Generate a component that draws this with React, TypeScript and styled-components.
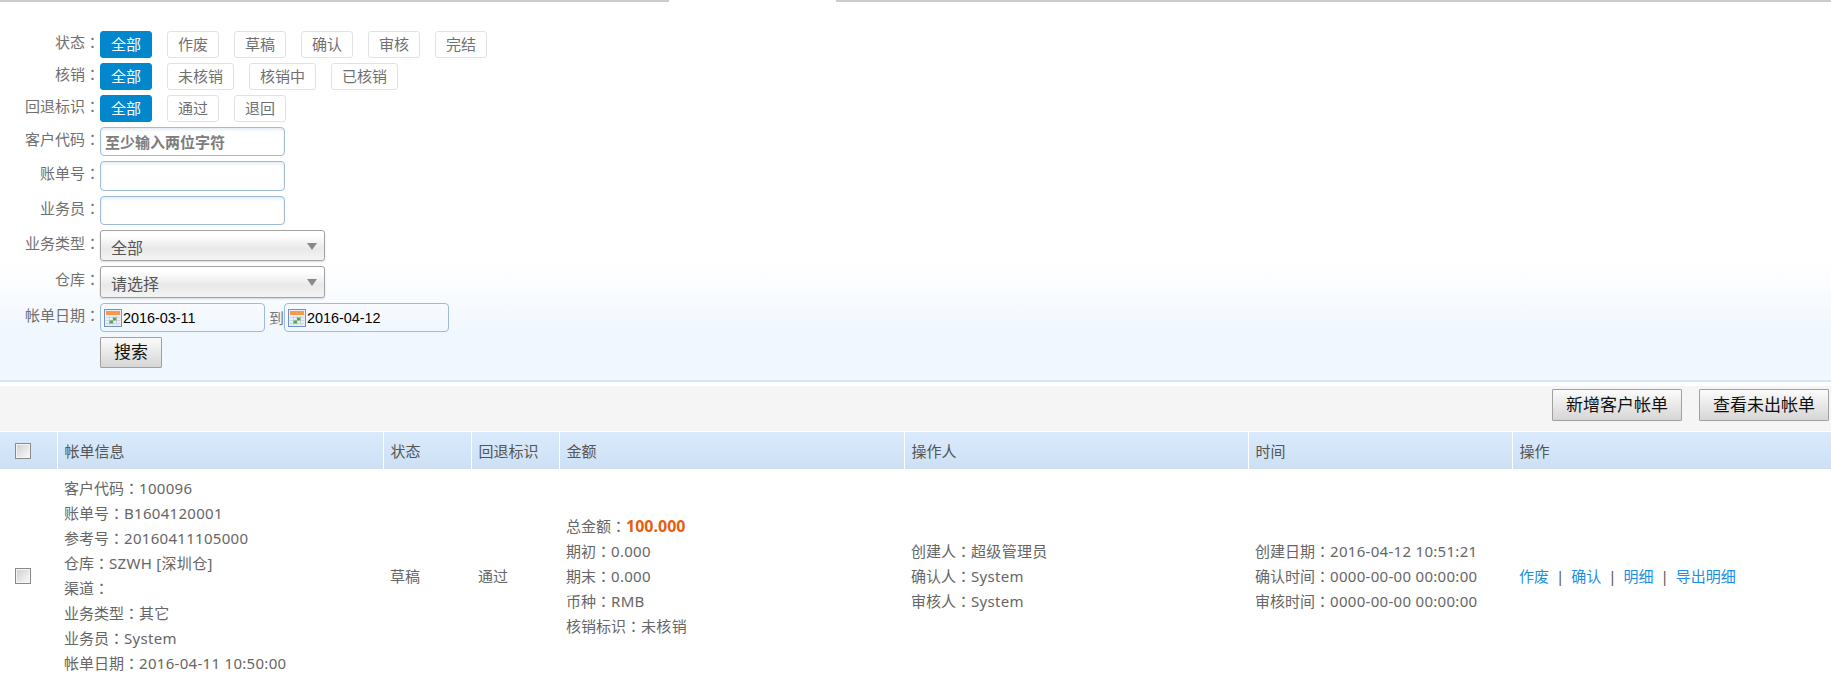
import React from 'react';
import styled, { createGlobalStyle } from 'styled-components';

const GlobalStyle = createGlobalStyle`
  html, body {
    margin: 0;
    padding: 0;
    background: #fff;
    overflow: hidden;
  }
  body {
    font-family: "Noto Sans", "Noto Sans CJK SC", sans-serif;
    font-size: 15px;
    color: #666;
  }
`;

const TopBar = styled.div`
  display: flex;
  justify-content: space-between;
`;

const TopSegment = styled.div<{ $width: number }>`
  width: ${(p) => p.$width}px;
  height: 2px;
  background: #ccc;
`;

const FilterPanel = styled.div`
  padding-top: 29px;
  height: 349px;
  box-sizing: content-box;
  background: linear-gradient(#fff 0, #fff 261px, #f1f7fe 330px, #f1f7fe 100%);
  border-bottom: 2px solid #d8e6f3;
`;

const FormRow = styled.div<{ $height: number; $gap?: number }>`
  display: flex;
  align-items: center;
  height: ${(p) => p.$height}px;
  margin-bottom: ${(p) => p.$gap ?? 5}px;
`;

const Label = styled.div`
  width: 100px;
  flex: none;
  box-sizing: border-box;
  height: 20px;
  margin-bottom: 6px;
  text-align: right;
  line-height: 20px;
  white-space: nowrap;
  color: #707070;
`;

// the reference font centres the full-width colon, the TC cut does the same
const Colon = styled.span`
  font-family: "Noto Sans CJK TC", sans-serif;
  line-height: 1;
`;

const Choices = styled.div`
  display: flex;
  gap: 15px;
`;

const Choice = styled.div<{ $active?: boolean }>`
  box-sizing: border-box;
  height: 27px;
  padding: 0 10px;
  line-height: 25px;
  text-align: center;
  border-radius: 3px;
  border: 1px solid ${(p) => (p.$active ? '#0287cc' : '#e2e2e2')};
  background: ${(p) => (p.$active ? '#0287cc' : '#fff')};
  color: ${(p) => (p.$active ? '#fff' : '#707070')};
`;

const TextField = styled.input`
  box-sizing: border-box;
  display: block;
  width: 185px;
  height: 100%;
  padding: 0 4px;
  margin: 0;
  border: 1px solid #9dbad9;
  border-radius: 4px;
  box-shadow: inset 0 2px 3px rgba(120, 150, 190, 0.18);
  outline: none;
  background: #fff;
  font-family: inherit;
  font-size: 15px;
  font-weight: 700;
  color: #7d7d7d;
`;

const SelectBox = styled.div`
  position: relative;
  box-sizing: border-box;
  width: 225px;
  height: 100%;
  padding: 4px 0 0 10px;
  border: 1px solid #a3a3a3;
  border-radius: 3px;
  background: linear-gradient(#fff 0, #fff 15%, #e9e9e9 60%, #f4f4f4 100%);
  box-shadow: 0 1px 2px rgba(0, 0, 0, 0.15);
  font-size: 16px;
  line-height: 26px;
  color: #555;
`;

const SelectArrow = styled.span`
  position: absolute;
  top: 12px;
  right: 7px;
  border-left: 5px solid transparent;
  border-right: 5px solid transparent;
  border-top: 7px solid #888;
`;

const DateField = styled.div`
  box-sizing: border-box;
  display: flex;
  align-items: center;
  gap: 1px;
  width: 165px;
  height: 100%;
  padding-left: 3px;
  border: 1px solid #9dbad9;
  border-radius: 4px;
  background: transparent;
  font-family: "Liberation Sans", sans-serif;
  font-size: 14.4px;
  color: #000;
`;

const DateSeparator = styled.span`
  box-sizing: border-box;
  width: 19px;
  padding-left: 4px;
  color: #777;
`;

const LegacyButton = styled.div<{ $width: number; $height: number }>`
  box-sizing: border-box;
  width: ${(p) => p.$width}px;
  height: ${(p) => p.$height}px;
  line-height: ${(p) => p.$height - 3}px;
  text-align: center;
  border: 1px solid #a0a0a0;
  border-radius: 1px;
  background: linear-gradient(#fbfbfb, #d6d6d6);
  font-size: 17px;
  color: #111;
`;

const Toolbar = styled.div`
  display: flex;
  justify-content: flex-end;
  align-items: flex-start;
  gap: 17px;
  height: 45px;
  margin-top: 4px;
  padding: 3px 2px 0 0;
  box-sizing: border-box;
  background: #f5f5f5;
`;

const Table = styled.table`
  width: 1831px;
  margin-top: 1px;
  table-layout: fixed;
  border-collapse: collapse;
`;

const Th = styled.th`
  height: 37px;
  padding: 0 7px;
  text-align: left;
  font-weight: 400;
  color: #555;
  background: linear-gradient(#d9eafc, #cde0f3);
  border-right: 1px solid #fff;
  &:last-child {
    border-right: 0;
  }
`;

const Td = styled.td`
  padding: 7px;
  vertical-align: middle;
  line-height: 25px;
  color: #666;
`;

const CheckCell = styled.div`
  display: flex;
  justify-content: flex-start;
  padding-left: 8px;
`;

const Check = styled.input.attrs({ type: 'checkbox' })`
  appearance: none;
  display: block;
  width: 16px;
  height: 16px;
  margin: 0;
  border: 1px solid #8a8a8a;
  background: linear-gradient(135deg, #cfcfcf, #fafafa);
  box-shadow: inset 0 0 0 1px #f4f4f4;
`;

const Line = styled.div`
  height: 25px;
  white-space: nowrap;
`;

const Value = styled.span`
  letter-spacing: 0.3px;
`;

const Total = styled.span`
  font-size: 16px;
  font-weight: 700;
  color: #e4600e;
`;

const Actions = styled.div`
  display: flex;
  align-items: center;
  white-space: nowrap;
`;

const ActionLink = styled.a`
  color: #1a8fe3;
  text-decoration: none;
`;

const ActionBar = styled.span`
  margin: 0 7px;
  color: #555;
`;

function CalendarIcon(): React.JSX.Element {
  return (
    <svg width='18' height='18' viewBox='0 0 18 18' style={{ flex: 'none' }}>
      <rect x='0.5' y='0.5' width='17' height='17' fill='#e9eef5' stroke='#6f94c4' />
      <rect x='2' y='2' width='14' height='4' fill='#f59a4a' />
      <path d='M2 8.5h14M2 11.5h14M2 14.5h14M5.5 7v9M9 7v9M12.5 7v9' stroke='#c4cfdc' strokeWidth='0.7' />
      <rect x='9' y='8.5' width='3.5' height='3' fill='#58a85a' />
      <rect x='5.5' y='11.5' width='3.5' height='3' fill='#58a85a' />
    </svg>
  );
}

const statusOptions = ['全部', '作废', '草稿', '确认', '审核', '完结'];
const writeOffOptions = ['全部', '未核销', '核销中', '已核销'];
const returnOptions = ['全部', '通过', '退回'];
const billLines = [
  ['客户代码', '100096'],
  ['账单号', 'B1604120001'],
  ['参考号', '20160411105000'],
  ['仓库', 'SZWH [深圳仓]'],
  ['渠道', ''],
  ['业务类型', '其它'],
  ['业务员', 'System'],
  ['帐单日期', '2016-04-11 10:50:00'],
];
const amountLines = [
  ['期初', '0.000'],
  ['期末', '0.000'],
  ['币种', 'RMB'],
  ['核销标识', '未核销'],
];
const operatorLines = [
  ['创建人', '超级管理员'],
  ['确认人', 'System'],
  ['审核人', 'System'],
];
const timeLines = [
  ['创建日期', '2016-04-12 10:51:21'],
  ['确认时间', '0000-00-00 00:00:00'],
  ['审核时间', '0000-00-00 00:00:00'],
];
const columns = ['帐单信息', '状态', '回退标识', '金额', '操作人', '时间', '操作'];
const columnWidths = [57, 326, 88, 88, 345, 344, 264, 319];
const actions = ['作废', '确认', '明细', '导出明细'];

function FieldLabel({ text }: { text: string }): React.JSX.Element {
  return (
    <Label>
      {text}
      <Colon>：</Colon>
    </Label>
  );
}

function ChoiceRow({ label, options }: { label: string; options: string[] }): React.JSX.Element {
  return (
    <FormRow $height={27}>
      <FieldLabel text={label} />
      <Choices>
        {options.map((option, i) => (
          <Choice key={option} $active={i === 0}>
            {option}
          </Choice>
        ))}
      </Choices>
    </FormRow>
  );
}

function InfoLines({ lines }: { lines: string[][] }): React.JSX.Element {
  return (
    <>
      {lines.map(([name, value]) => (
        <Line key={name}>
          {name}
          <Colon>：</Colon>
          <Value>{value}</Value>
        </Line>
      ))}
    </>
  );
}

function App(): React.JSX.Element {
  return (
    <>
      <GlobalStyle />
      <TopBar>
        <TopSegment $width={669} />
        <TopSegment $width={995} />
      </TopBar>
      <FilterPanel>
        <ChoiceRow label='状态' options={statusOptions} />
        <ChoiceRow label='核销' options={writeOffOptions} />
        <ChoiceRow label='回退标识' options={returnOptions} />
        <FormRow $height={29}>
          <FieldLabel text='客户代码' />
          <TextField readOnly value='至少输入两位字符' />
        </FormRow>
        <FormRow $height={30}>
          <FieldLabel text='账单号' />
          <TextField readOnly value='' />
        </FormRow>
        <FormRow $height={29}>
          <FieldLabel text='业务员' />
          <TextField readOnly value='' />
        </FormRow>
        <FormRow $height={31}>
          <FieldLabel text='业务类型' />
          <SelectBox>
            全部
            <SelectArrow />
          </SelectBox>
        </FormRow>
        <FormRow $height={32}>
          <FieldLabel text='仓库' />
          <SelectBox>
            请选择
            <SelectArrow />
          </SelectBox>
        </FormRow>
        <FormRow $height={29}>
          <FieldLabel text='帐单日期' />
          <DateField>
            <CalendarIcon />
            2016-03-11
          </DateField>
          <DateSeparator>到</DateSeparator>
          <DateField>
            <CalendarIcon />
            2016-04-12
          </DateField>
        </FormRow>
        <FormRow $height={31} $gap={0}>
          <Label />
          <LegacyButton $width={62} $height={31}>
            搜索
          </LegacyButton>
        </FormRow>
      </FilterPanel>
      <Toolbar>
        <LegacyButton $width={130} $height={32}>
          新增客户帐单
        </LegacyButton>
        <LegacyButton $width={130} $height={32}>
          查看未出帐单
        </LegacyButton>
      </Toolbar>
      <Table>
        <colgroup>
          {columnWidths.map((width, i) => (
            <col key={i} width={width} />
          ))}
        </colgroup>
        <thead>
          <tr>
            <Th>
              <CheckCell>
                <Check />
              </CheckCell>
            </Th>
            {columns.map((column) => (
              <Th key={column}>{column}</Th>
            ))}
          </tr>
        </thead>
        <tbody>
          <tr>
            <Td>
              <CheckCell>
                <Check />
              </CheckCell>
            </Td>
            <Td>
              <InfoLines lines={billLines} />
            </Td>
            <Td>草稿</Td>
            <Td>通过</Td>
            <Td>
              <Line>
                总金额
                <Colon>：</Colon>
                <Total>100.000</Total>
              </Line>
              <InfoLines lines={amountLines} />
            </Td>
            <Td>
              <InfoLines lines={operatorLines} />
            </Td>
            <Td>
              <InfoLines lines={timeLines} />
            </Td>
            <Td>
              <Actions>
                {actions.map((action, i) => (
                  <React.Fragment key={action}>
                    {i > 0 && <ActionBar>|</ActionBar>}
                    <ActionLink href='#'>{action}</ActionLink>
                  </React.Fragment>
                ))}
              </Actions>
            </Td>
          </tr>
        </tbody>
      </Table>
    </>
  );
}

export default App;
